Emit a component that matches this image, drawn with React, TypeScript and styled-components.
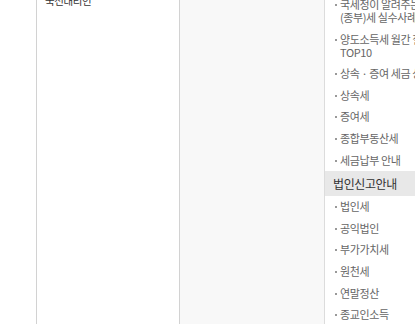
import React from 'react'
import styled, { createGlobalStyle } from 'styled-components'

const GlobalStyle = createGlobalStyle`
  html, body {
    margin: 0;
    padding: 0;
    background: #fff;
    overflow: hidden;
  }
  body {
    font-family: "Noto Sans CJK KR", "Noto Sans", sans-serif;
  }
`

const taxMenu = [
  '국세청이 알려주는 양도 (종부)세 실수사례',
  '양도소득세 월간 질의 TOP10',
  '상속 · 증여 세금 상식',
  '상속세',
  '증여세',
  '종합부동산세',
  '세금납부 안내',
]

const corpMenu = ['법인세', '공익법인', '부가가치세', '원천세', '연말정산', '종교인소득']

const App = () => {
  return (
    <>
      <GlobalStyle />
      <Page>
        <Gutter />
        <LeftCol>
          <LeftTitle>국선대리인</LeftTitle>
        </LeftCol>
        <Content />
        <SideMenu>
          <MenuList>
            {taxMenu.map((m) => (
              <MenuItem key={m}>{m}</MenuItem>
            ))}
          </MenuList>
          <MenuHead>법인신고안내</MenuHead>
          <MenuList>
            {corpMenu.map((m) => (
              <MenuItem key={m}>{m}</MenuItem>
            ))}
          </MenuList>
        </SideMenu>
      </Page>
    </>
  )
}

const Page = styled.div`
  display: flex;
  align-items: stretch;
  height: 340px;
  margin-top: -6px;
`

const Gutter = styled.div`
  width: 36px;
  flex-shrink: 0;
`

const LeftCol = styled.div`
  width: 144px;
  flex-shrink: 0;
  box-sizing: border-box;
  border-left: 1px solid #d2d2d2;
  border-right: 1px solid #d2d2d2;
  padding-left: 8px;
`

const LeftTitle = styled.div`
  font-size: 10.5px;
  line-height: 13px;
  color: #333;
  letter-spacing: -0.4px;
`

const Content = styled.div`
  width: 144px;
  flex-shrink: 0;
  background: #f8f8f8;
  border-right: 1px solid #dcdcdc;
`

const SideMenu = styled.div`
  flex: 1;
  min-width: 0;
  overflow: hidden;
`

const MenuList = styled.ul`
  list-style: none;
  margin: 0;
  padding: 0;
  width: 140px;
`

const MenuItem = styled.li`
  position: relative;
  padding: 4px 0 4.6px 15px;
  font-size: 11px;
  line-height: 13px;
  color: #666;
  letter-spacing: -0.4px;
  word-break: keep-all;
  &::before {
    content: '';
    position: absolute;
    left: 10px;
    top: 10px;
    width: 2px;
    height: 2px;
    background: #999;
  }
`

const MenuHead = styled.div`
  background: #e8e8e8;
  height: 25px;
  line-height: 25px;
  padding-left: 8px;
  font-size: 12px;
  color: #333;
  letter-spacing: -0.4px;
  white-space: nowrap;
`

export default App
